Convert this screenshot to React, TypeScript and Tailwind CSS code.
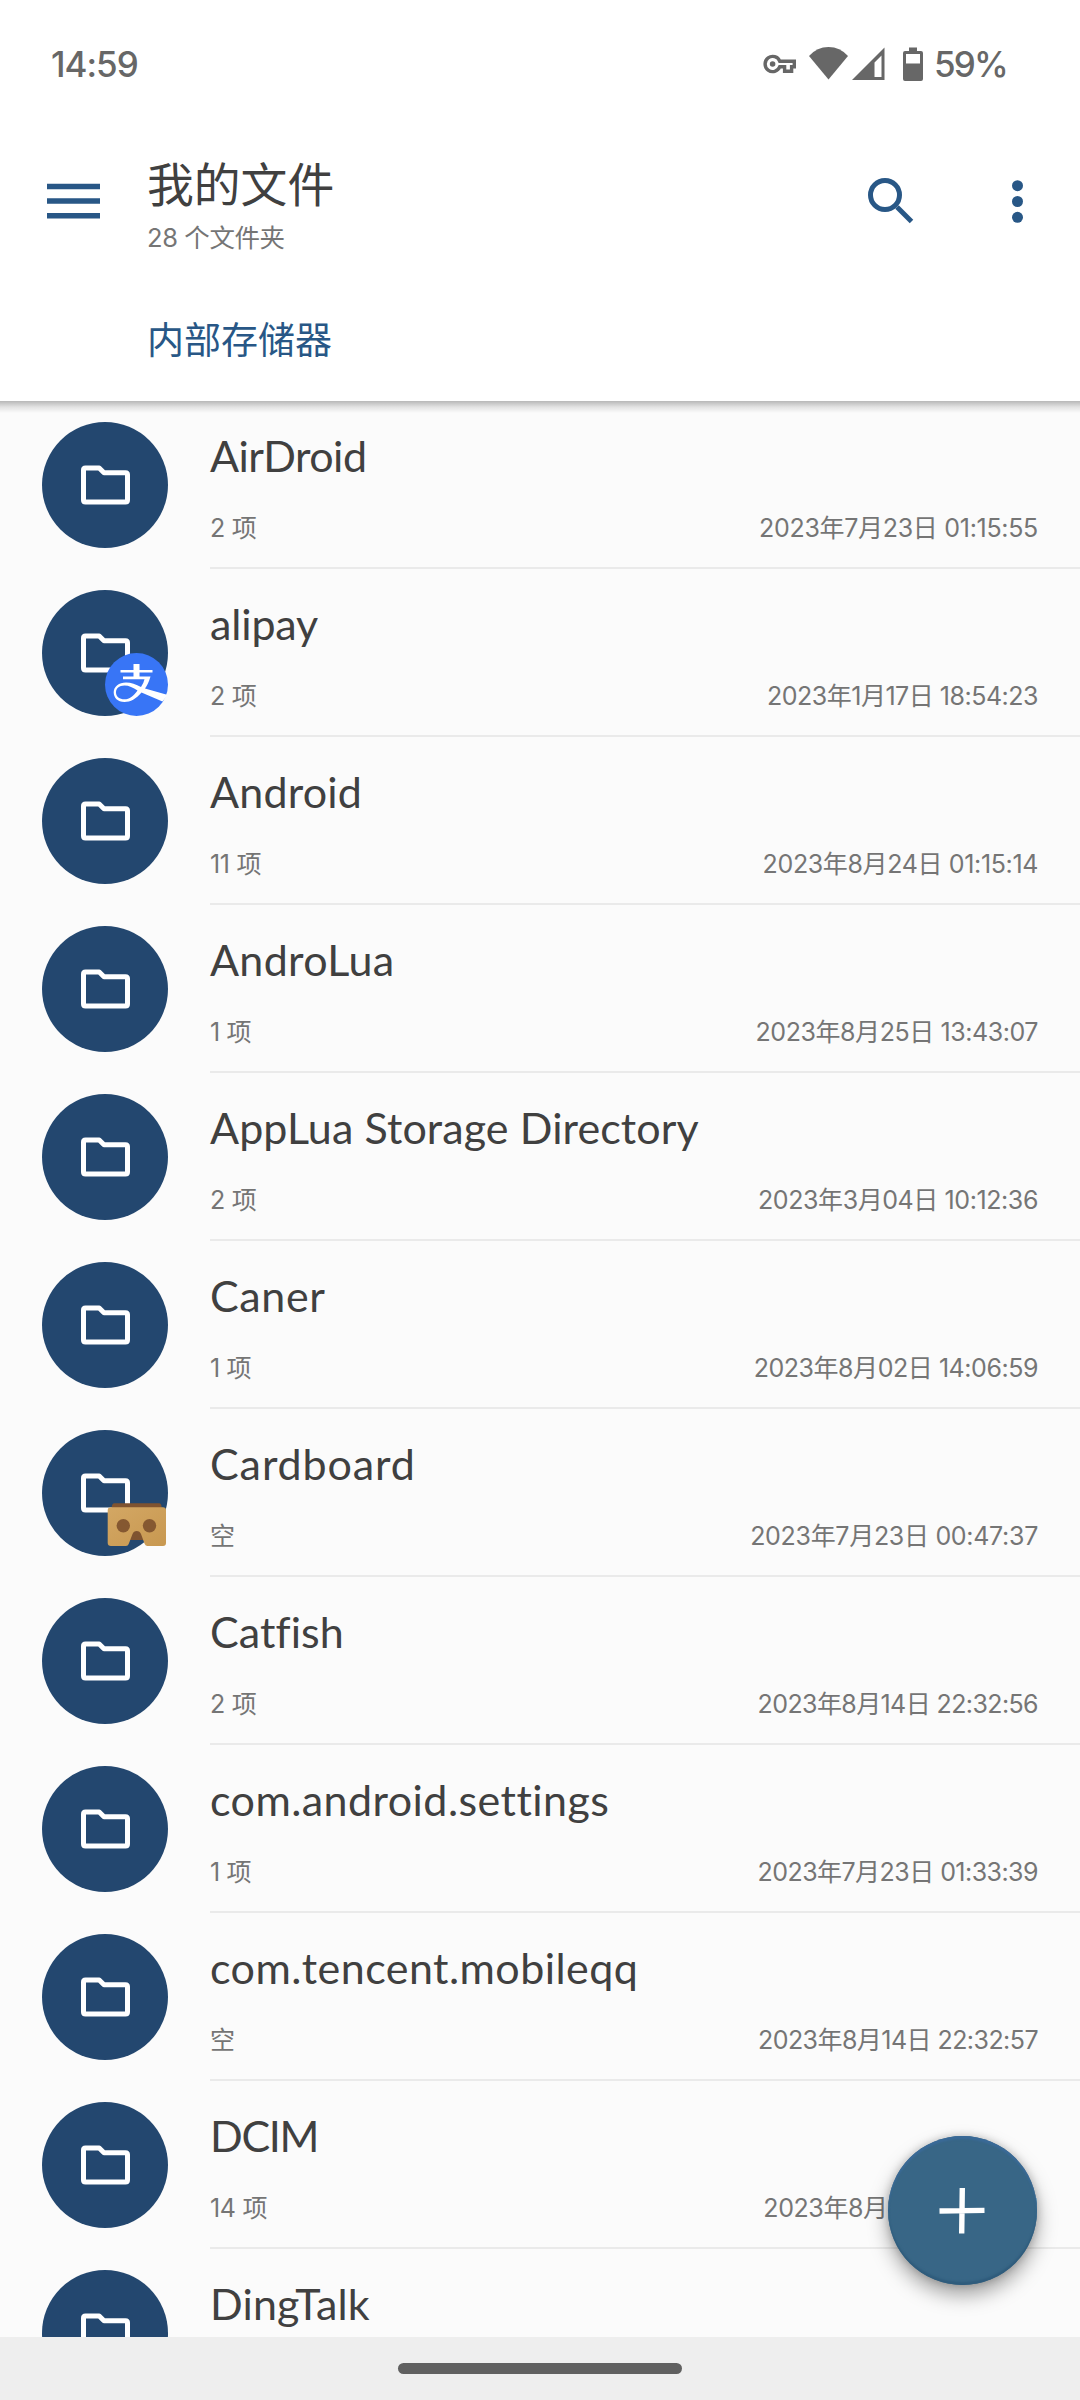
type Folder = {
  name: string;
  count: string;
  date: string;
  nameClass: string;
  dateClass: string;
  badge?: 'alipay' | 'cardboard';
};

const folders: Folder[] = [
  { name: 'AirDroid', count: '2 项', date: '2023年7月23日 01:15:55', nameClass: 'tracking-[-0.49px]', dateClass: 'tracking-[-0.3px]' },
  { name: 'alipay', count: '2 项', date: '2023年1月17日 18:54:23', nameClass: 'tracking-[-0.15px]', dateClass: 'tracking-[-0.49px]', badge: 'alipay' },
  { name: 'Android', count: '11 项', date: '2023年8月24日 01:15:14', nameClass: 'tracking-[0.2px]', dateClass: 'tracking-[-0.36px]' },
  { name: 'AndroLua', count: '1 项', date: '2023年8月25日 13:43:07', nameClass: 'tracking-[0.33px]', dateClass: 'tracking-[-0.43px]' },
  { name: 'AppLua Storage Directory', count: '2 项', date: '2023年3月04日 10:12:36', nameClass: 'tracking-[0.1px]', dateClass: 'tracking-[-0.41px]' },
  { name: 'Caner', count: '1 项', date: '2023年8月02日 14:06:59', nameClass: 'tracking-[0.6px]', dateClass: 'tracking-[-0.45px]' },
  { name: 'Cardboard', count: '空', date: '2023年7月23日 00:47:37', nameClass: 'tracking-[0.9px]', dateClass: 'tracking-[-0.3px]', badge: 'cardboard' },
  { name: 'Catfish', count: '2 项', date: '2023年8月14日 22:32:56', nameClass: 'tracking-[0.1px]', dateClass: 'tracking-[-0.6px]' },
  { name: 'com.android.settings', count: '1 项', date: '2023年7月23日 01:33:39', nameClass: 'tracking-[0.44px]', dateClass: 'tracking-[-0.54px]' },
  { name: 'com.tencent.mobileqq', count: '空', date: '2023年8月14日 22:32:57', nameClass: 'tracking-[0.45px]', dateClass: 'tracking-[-0.55px]' },
  { name: 'DCIM', count: '14 项', date: '2023年8月14日 14:35:21', nameClass: 'tracking-[-1.3px]', dateClass: 'tracking-[-0.4px]' },
  { name: 'DingTalk', count: '3 项', date: '2023年8月14日 22:33:01', nameClass: 'tracking-[0.15px]', dateClass: 'tracking-[-0.5px]' },
];

function StatusBar() {
  return (
    <div className="flex h-[128px] items-center pr-[75px] pl-[51px] font-[Inter,sans-serif] text-[35px] font-medium text-[#676767]">
      <span className="flex-1 tracking-[-1px]">14:59</span>
      <svg className="h-5 w-[34px]" viewBox="0 0 34 20" fill="none" stroke="currentColor" strokeWidth="3.4">
        <path d="M16.8 7.3H31.3V12.7H28.6V17.3H21.6V12.7H16.8A7.6 7.6 0 1 1 16.8 7.3Z" />
        <circle cx="9.6" cy="10" r="2.8" fill="currentColor" stroke="none" />
      </svg>
      <svg className="ml-3 h-[34px] w-[39px]" viewBox="0 0 39 34" fill="currentColor">
        <path d="M0 9Q8 0 19.5 0T39 9L19.5 32.5Z" />
      </svg>
      <svg className="ml-1 h-[34px] w-[33px]" viewBox="0 0 33 34" fill="currentColor">
        <path d="M32.5 0.5V33H0ZM29.5 8.5L22.5 15.5V30H29.5Z" fillRule="evenodd" />
      </svg>
      <svg className="ml-[18px] h-[35px] w-5" viewBox="0 0 20 35" fill="currentColor">
        <path d="M6 0.5H14V4H18Q20 4 20 6V32Q20 34 18 34H2Q0 34 0 32V6Q0 4 2 4H6ZM3 7V16.5H17V7Z" fillRule="evenodd" />
      </svg>
      <span className="ml-[11px] w-[71px] tracking-[-1.8px]">59%</span>
    </div>
  );
}

function Header() {
  return (
    <header className="relative z-10 h-[401px] shrink-0 bg-white">
      <StatusBar />
      <div className="flex h-[146px] pr-[57px] pl-[47px] text-[#285786]">
        <svg className="h-9 w-[53px] self-center" viewBox="0 0 53 36" fill="currentColor">
          <path d="M0 0.8H53V6.3H0ZM0 15.3H53V20.8H0ZM0 30H53V35.5H0Z" />
        </svg>
        <div className="flex-1 pt-[26px] pl-[47px]">
          <h1 className="font-['Noto_Sans_CJK_SC',sans-serif] text-[46.8px] leading-[56px] text-[#404040]">我的文件</h1>
          <p className="mt-3 font-[Inter,'Noto_Sans_CJK_SC',sans-serif] text-[25.5px] leading-8 tracking-[-0.4px] text-[#757575]">28 个文件夹</p>
        </div>
        <svg className="h-[46px] w-[46px] self-center" viewBox="0 0 46 46" fill="none" stroke="currentColor" strokeWidth="5">
          <circle cx="17" cy="17" r="14.5" />
          <path d="M29 29L43.5 43.5" />
        </svg>
        <svg className="ml-[98px] h-[43px] w-[11px] self-center" viewBox="0 0 11 43" fill="currentColor">
          <circle cx="5.5" cy="5.7" r="5.5" />
          <circle cx="5.5" cy="21.5" r="5.5" />
          <circle cx="5.5" cy="37.3" r="5.5" />
        </svg>
      </div>
      <p className="pt-[42px] pl-[147px] font-['Noto_Sans_CJK_SC',sans-serif] text-[37px] leading-[44px] text-[#285786]">内部存储器</p>
      <div className="absolute inset-x-0 top-full h-[12px] bg-linear-to-b from-black/27 via-black/10 to-transparent" />
    </header>
  );
}

function AlipayBadge() {
  return (
    <svg className="absolute right-0 bottom-0 h-[63px] w-[63px]" viewBox="0 0 63 63">
      <circle cx="31.5" cy="31.5" r="31.5" fill="#3875f6" />
      <path
        d="M28.5 11H34.5V17H47.5V19.5H34.5V23.5H45.5C44 29 42 32.500 40 35.5L62 41.8Q60.5 45.5 57.5 48.6L36.5 39.5C31 46 25.5 49 19.5 49C12.5 49 8.7 44.5 8.7 39.2C8.7 33.5 14 29.5 21 29.5C26 29.5 31 31.5 36 34Q38.5 30.5 39.5 26.2H18V23.5H28.5V19.5H15.5V17H28.5ZM32.5 37.5C28 34.5 24 32.5 19.5 32.5C14 32.5 11 35.5 11 39.5C11 43.5 14.5 46.3 19.5 46.3C24.5 46.3 28.5 43 32.5 37.5Z"
        fill="#fff"
        fillRule="evenodd"
      />
    </svg>
  );
}

function CardboardBadge() {
  return (
    <svg className="absolute right-0 bottom-0 h-[63px] w-[63px]" viewBox="0 0 63 63">
      <defs>
        <linearGradient id="cardboard" x1="0" y1="0" x2="1" y2="1">
          <stop offset="0" stopColor="#d3a764" />
          <stop offset="1" stopColor="#c89850" />
        </linearGradient>
      </defs>
      {/* lid and nose piece behind the body */}
      <path d="M9.5 10.3H54Q56.7 10.3 56.7 15H6.7Q6.700 10.3 9.5 10.3ZM24 36H39V47H24Z" fill="#7f5330" />
      <path
        d="M6 14.3H58Q61 14.3 61 17.5V50Q61 53 58 53H42.5Q40.5 53 39.7 51L36 41Q34.8 38 31.7 38T27.5 41L23.7 51Q23 53 21 53H6Q2.7 53 2.7 50V17.5Q2.7 14.3 6 14.3Z"
        fill="url(#cardboard)"
      />
      <circle cx="18.3" cy="32.7" r="6.7" fill="#855831" />
      <circle cx="44.5" cy="32.7" r="6.7" fill="#855831" />
    </svg>
  );
}

function FolderRow({ folder }: { folder: Folder }) {
  return (
    <li className="flex h-[168px] pl-[42px]">
      <div className="relative mt-[21px] flex h-[126px] w-[126px] shrink-0 items-center justify-center rounded-full bg-[#23476f]">
        <svg className="h-10 w-[49px]" viewBox="0 0 49 40" fill="none" stroke="#fff" strokeWidth="5" strokeLinejoin="round">
          <path d="M4.5 3H18.2L23 7.7H44.5Q46.5 7.7 46.5 9.7V35Q46.5 37 44.5 37H4.5Q2.5 37 2.5 35V5Q2.5 3 4.5 3Z" />
        </svg>
        {folder.badge === 'alipay' && <AlipayBadge />}
        {folder.badge === 'cardboard' && <CardboardBadge />}
      </div>
      <div className="ml-[42px] flex-1 border-b-2 border-[#eaeaea] pt-[29px] pr-[42px]">
        <p className="font-[Lato,sans-serif] text-[43px] leading-[52px] whitespace-nowrap text-[#404040]">
          <span className={folder.nameClass}>{folder.name}</span>
        </p>
        <div className="mt-[30px] flex justify-between font-[Inter,'Noto_Sans_CJK_SC',sans-serif] text-[25px] leading-8 text-[#757575]">
          <span className="tracking-[-0.3px]">{folder.count}</span>
          <span className={folder.dateClass}>{folder.date}</span>
        </div>
      </div>
    </li>
  );
}

export default function App() {
  return (
    <div className="relative flex h-[2400px] w-[1080px] flex-col overflow-hidden bg-[#fbfbfb]">
      <Header />
      <ul className="h-[1936px] shrink-0 overflow-hidden">
        {folders.map((folder) => (
          <FolderRow key={folder.name} folder={folder} />
        ))}
      </ul>
      {/* gesture navigation bar */}
      <nav className="flex flex-1 justify-center bg-[#eeeeee] pt-[26px]">
        <div className="h-[11px] w-[284px] rounded-full bg-[#606060]" />
      </nav>
      <button className="absolute right-[43.5px] bottom-[115px] h-[149px] w-[149px] rounded-full bg-[#386686] shadow-[0_10px_20px_rgba(0,0,0,0.36),0_0_8px_rgba(0,0,0,0.2),inset_0_3px_2px_#3a6a98,inset_0_-3px_2px_#2f5c7c]">
        <svg viewBox="0 0 149 149" fill="none" stroke="#fff" strokeWidth="5.4">
          <path d="M51.5 75L96.5 74.4M74.3 52L73.7 97.5" />
        </svg>
      </button>
    </div>
  );
}
